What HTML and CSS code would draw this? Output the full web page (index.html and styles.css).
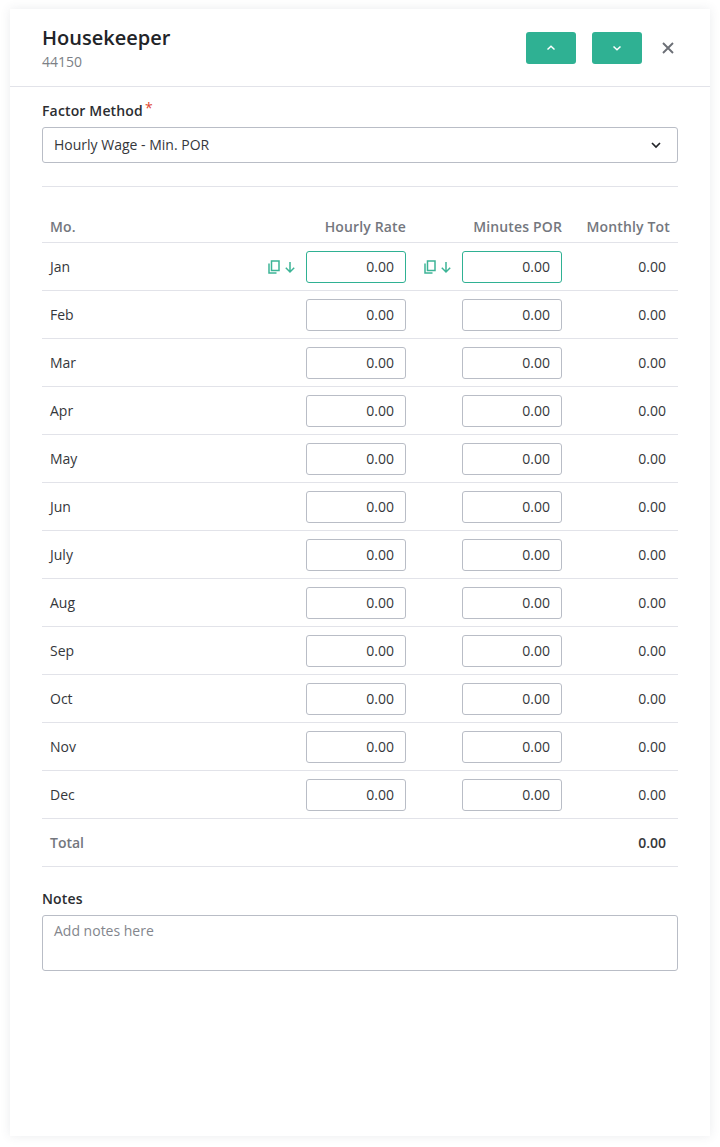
FILE: index.html
```html
<!DOCTYPE html>
<html lang="en">
<head>
    <meta charset="UTF-8">
    <meta name="viewport" content="width=device-width, initial-scale=1.0">
    <title>Housekeeper</title>
    <link rel="stylesheet" href="styles.css">
</head>
<body>
    <div class="panel">
        <div class="panel-header">
            <div class="panel-title">
                <h1>Housekeeper</h1>
                <div class="panel-code">44150</div>
            </div>
            <button class="nav-button" type="button">
                <svg width="12" height="12" viewBox="0 0 12 12"><path d="M2.5 7.5 6 4.2l3.5 3.3" /></svg>
            </button>
            <button class="nav-button" type="button">
                <svg width="12" height="12" viewBox="0 0 12 12"><path d="M2.5 4.5 6 7.8l3.5-3.3" /></svg>
            </button>
            <button class="close-button" type="button">
                <svg width="12" height="12" viewBox="0 0 12 12"><path d="M1 1l10 10M11 1 1 11" /></svg>
            </button>
        </div>

        <div class="panel-body">
            <div class="field-label">Factor Method<span class="required">*</span></div>
            <div class="select-box">
                <span>Hourly Wage - Min. POR</span>
                <svg width="12" height="12" viewBox="0 0 12 12"><path d="M2 4l4 4 4-4" /></svg>
            </div>
            <hr class="divider">

            <table class="rate-table">
                <colgroup>
                    <col class="col-month">
                    <col class="col-input">
                    <col class="col-input">
                    <col class="col-total">
                </colgroup>
                <thead>
                    <tr>
                        <th class="month">Mo.</th>
                        <th>Hourly Rate</th>
                        <th>Minutes POR</th>
                        <th class="total">Monthly Tot</th>
                    </tr>
                </thead>
                <tbody>
                    <tr>
                        <td class="month">Jan</td>
                        <td><div class="cell-input">
                            <svg class="copy-icon" width="12" height="14" viewBox="0 0 12 14"><path d="M3.5 1h7.5v9.5H3.5zM1 3.5V13h7.5" /></svg>
                            <svg class="copy-icon arrow" width="12" height="14" viewBox="0 0 12 14"><path d="M6 2v10M1.8 7.8 6 12l4.2-4.2" /></svg>
                            <input class="num-input active" value="0.00">
                        </div></td>
                        <td><div class="cell-input">
                            <svg class="copy-icon" width="12" height="14" viewBox="0 0 12 14"><path d="M3.5 1h7.5v9.5H3.5zM1 3.5V13h7.5" /></svg>
                            <svg class="copy-icon arrow" width="12" height="14" viewBox="0 0 12 14"><path d="M6 2v10M1.8 7.8 6 12l4.2-4.2" /></svg>
                            <input class="num-input active" value="0.00">
                        </div></td>
                        <td class="total">0.00</td>
                    </tr>
                    <tr>
                        <td class="month">Feb</td>
                        <td><div class="cell-input"><input class="num-input" value="0.00"></div></td>
                        <td><div class="cell-input"><input class="num-input" value="0.00"></div></td>
                        <td class="total">0.00</td>
                    </tr>
                    <tr>
                        <td class="month">Mar</td>
                        <td><div class="cell-input"><input class="num-input" value="0.00"></div></td>
                        <td><div class="cell-input"><input class="num-input" value="0.00"></div></td>
                        <td class="total">0.00</td>
                    </tr>
                    <tr>
                        <td class="month">Apr</td>
                        <td><div class="cell-input"><input class="num-input" value="0.00"></div></td>
                        <td><div class="cell-input"><input class="num-input" value="0.00"></div></td>
                        <td class="total">0.00</td>
                    </tr>
                    <tr>
                        <td class="month">May</td>
                        <td><div class="cell-input"><input class="num-input" value="0.00"></div></td>
                        <td><div class="cell-input"><input class="num-input" value="0.00"></div></td>
                        <td class="total">0.00</td>
                    </tr>
                    <tr>
                        <td class="month">Jun</td>
                        <td><div class="cell-input"><input class="num-input" value="0.00"></div></td>
                        <td><div class="cell-input"><input class="num-input" value="0.00"></div></td>
                        <td class="total">0.00</td>
                    </tr>
                    <tr>
                        <td class="month">July</td>
                        <td><div class="cell-input"><input class="num-input" value="0.00"></div></td>
                        <td><div class="cell-input"><input class="num-input" value="0.00"></div></td>
                        <td class="total">0.00</td>
                    </tr>
                    <tr>
                        <td class="month">Aug</td>
                        <td><div class="cell-input"><input class="num-input" value="0.00"></div></td>
                        <td><div class="cell-input"><input class="num-input" value="0.00"></div></td>
                        <td class="total">0.00</td>
                    </tr>
                    <tr>
                        <td class="month">Sep</td>
                        <td><div class="cell-input"><input class="num-input" value="0.00"></div></td>
                        <td><div class="cell-input"><input class="num-input" value="0.00"></div></td>
                        <td class="total">0.00</td>
                    </tr>
                    <tr>
                        <td class="month">Oct</td>
                        <td><div class="cell-input"><input class="num-input" value="0.00"></div></td>
                        <td><div class="cell-input"><input class="num-input" value="0.00"></div></td>
                        <td class="total">0.00</td>
                    </tr>
                    <tr>
                        <td class="month">Nov</td>
                        <td><div class="cell-input"><input class="num-input" value="0.00"></div></td>
                        <td><div class="cell-input"><input class="num-input" value="0.00"></div></td>
                        <td class="total">0.00</td>
                    </tr>
                    <tr>
                        <td class="month">Dec</td>
                        <td><div class="cell-input"><input class="num-input" value="0.00"></div></td>
                        <td><div class="cell-input"><input class="num-input" value="0.00"></div></td>
                        <td class="total">0.00</td>
                    </tr>
                    <tr class="total-row">
                        <td class="month">Total</td>
                        <td></td>
                        <td></td>
                        <td class="total">0.00</td>
                    </tr>
                </tbody>
            </table>

            <div class="field-label notes-label">Notes</div>
            <textarea class="notes" placeholder="Add notes here"></textarea>
        </div>
    </div>
</body>
</html>
```

FILE: styles.css
```css
* {
    box-sizing: border-box;
}

body {
    margin: 0;
    padding: 9px 10px 11px;
    height: 1147px;
    overflow: hidden;
    background-color: #fff;
    font-family: "Open Sans", Arial, sans-serif;
    font-size: 14px;
    color: #35373b;
}

.panel {
    height: 100%;
    background-color: #fff;
    box-shadow: 0 0 10px rgba(60, 70, 90, 0.1);
}

.panel-header {
    display: flex;
    align-items: center;
    height: 78px;
    padding: 0 36px 0 32px;
    border-bottom: 1px solid #e2e3e9;
}

.panel-title {
    flex-grow: 1;
}

h1 {
    margin: 0;
    font-size: 20px;
    font-weight: 600;
    line-height: 28px;
    color: #222428;
}

.panel-code {
    font-size: 14px;
    line-height: 20px;
    color: #7c7f86;
}

.nav-button {
    display: flex;
    align-items: center;
    justify-content: center;
    width: 50px;
    height: 32px;
    margin-left: 16px;
    padding: 0;
    border: none;
    border-radius: 3px;
    background-color: #2fb193;
}

.nav-button svg {
    fill: none;
    stroke: #fff;
    stroke-width: 1.5;
}

.close-button {
    display: flex;
    align-items: center;
    justify-content: center;
    width: 12px;
    height: 32px;
    margin-left: 20px;
    padding: 0;
    border: none;
    background: none;
}

.close-button svg {
    fill: none;
    stroke: #6c6f76;
    stroke-width: 1.9;
}

.panel-body {
    padding: 14px 32px 0;
}

.field-label {
    height: 20px;
    font-size: 14px;
    font-weight: 600;
    line-height: 20px;
    letter-spacing: 0.15px;
    color: #2b2d31;
    margin-bottom: 6px;
}

.required {
    position: relative;
    top: -3px;
    margin-left: 2px;
    font-size: 14px;
    font-weight: 400;
    color: #e0452f;
}

.select-box {
    display: flex;
    align-items: center;
    justify-content: space-between;
    height: 36px;
    padding: 0 15px 1px 11px;
    border: 1px solid #b9bdc6;
    border-radius: 3px;
}

.select-box svg {
    fill: none;
    stroke: #222428;
    stroke-width: 1.7;
}

.divider {
    height: 1px;
    margin: 23px 0 0;
    border: none;
    background-color: #e2e3e9;
}

.rate-table {
    width: 100%;
    margin-top: 26px;
    table-layout: fixed;
    border-collapse: collapse;
}

.col-input {
    width: 156px;
}

.col-total {
    width: 116px;
}

th {
    height: 29px;
    padding: 0;
    font-weight: 600;
    line-height: 20px;
    letter-spacing: 0.15px;
    text-align: right;
    color: #74777e;
    border-bottom: 1px solid #e2e3e9;
}

td {
    height: 48px;
    padding: 0;
    border-bottom: 1px solid #e2e3e9;
}

th.month {
    padding-left: 8px;
    text-align: left;
}

td.month {
    padding-left: 8px;
}

th.total {
    padding-right: 8px;
}

td.total {
    padding-right: 12px;
    text-align: right;
}

.cell-input {
    display: flex;
    align-items: center;
    justify-content: flex-end;
    padding-top: 1px;
}

.copy-icon {
    margin-right: 4px;
    fill: none;
    stroke: #3cb496;
    stroke-width: 1.5;
}

.copy-icon.arrow {
    margin-right: 10px;
}

.num-input {
    width: 100px;
    height: 32px;
    padding: 0 11px 1px;
    border: 1px solid #b9bdc6;
    border-radius: 3px;
    font-family: inherit;
    font-size: 14px;
    text-align: right;
    color: #35373b;
}

.num-input.active {
    border-color: #2fb193;
}

.total-row td.month {
    font-weight: 600;
    color: #74777e;
}

.total-row td.total {
    font-weight: 600;
}

.notes-label {
    margin-top: 22px;
    margin-bottom: 6px;
}

.notes {
    display: block;
    width: 100%;
    height: 56px;
    padding: 5px 11px;
    border: 1px solid #b9bdc6;
    border-radius: 3px;
    font-family: inherit;
    font-size: 14px;
    resize: none;
}

.notes::placeholder {
    color: #83868d;
    opacity: 1;
}
```
